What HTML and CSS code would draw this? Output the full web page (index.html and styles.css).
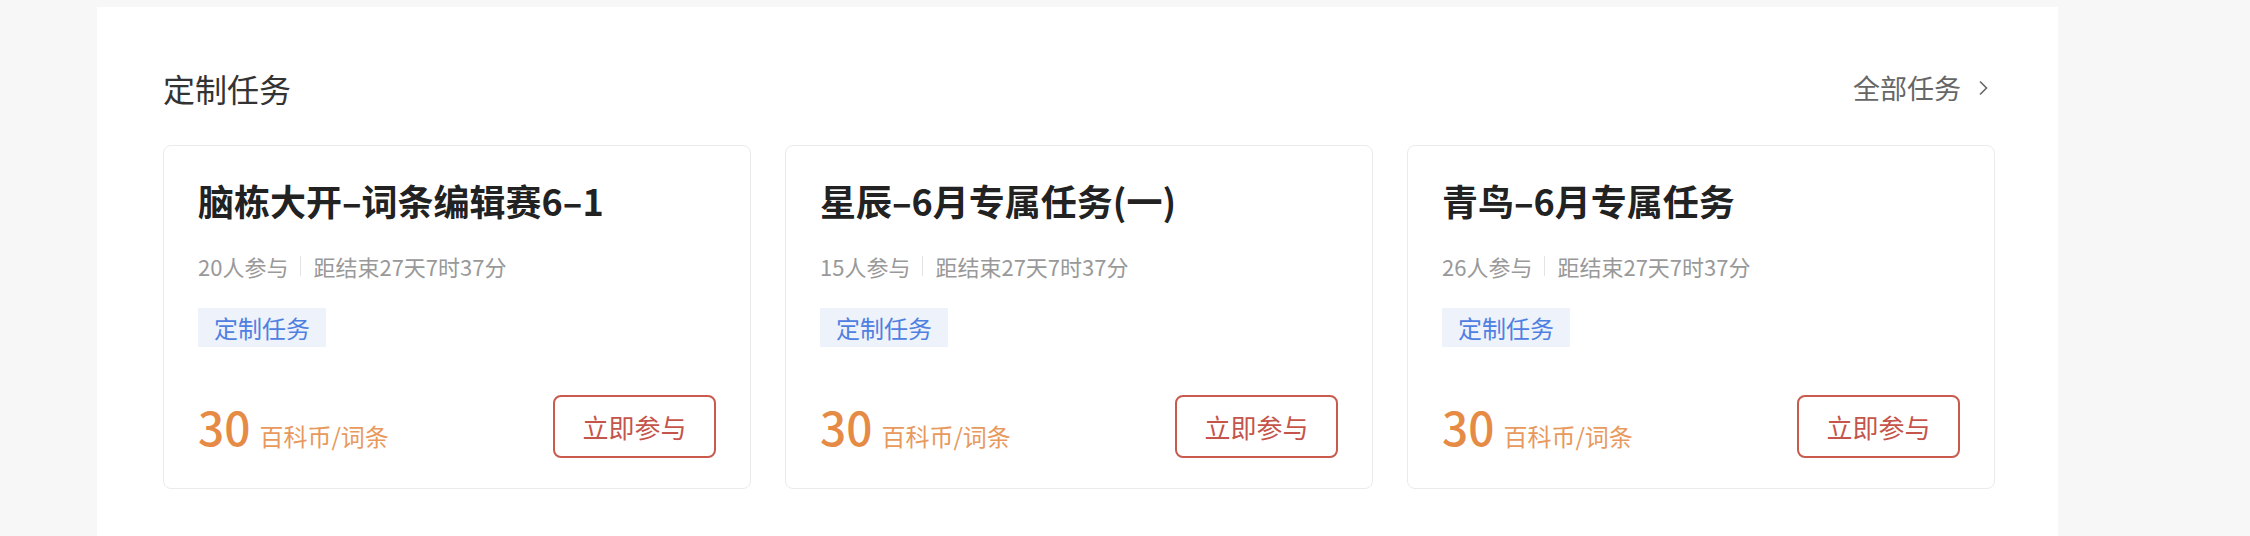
FILE: index.html
```html
<!DOCTYPE html>
<html lang="zh-CN">
<head>
    <meta charset="UTF-8">
    <title>定制任务</title>
    <link rel="stylesheet" href="styles.css">
</head>
<body>

<div class="panel">
    <!-- Section header -->
    <div class="panel-head">
        <h2 class="panel-title">定制任务</h2>
        <a class="more-link" href="#">全部任务
            <svg class="chevron" width="14" height="16" viewBox="0 0 14 16">
                <path d="M4 1.5 L10.5 8 L4 14.5" fill="none" stroke="#666" stroke-width="1.6"/>
            </svg>
        </a>
    </div>

    <!-- Task cards -->
    <div class="task-list">
        <div class="task-card">
            <div class="task-name">脑栋大开–词条编辑赛6–1</div>
            <div class="task-meta">
                <span>20人参与</span>
                <span class="divider"></span>
                <span>距结束27天7时37分</span>
            </div>
            <span class="task-tag">定制任务</span>
            <div class="task-foot">
                <div class="reward"><span class="reward-num">30</span><span class="reward-unit">百科币/词条</span></div>
                <button class="join-btn">立即参与</button>
            </div>
        </div>

        <div class="task-card">
            <div class="task-name">星辰–6月专属任务(一)</div>
            <div class="task-meta">
                <span>15人参与</span>
                <span class="divider"></span>
                <span>距结束27天7时37分</span>
            </div>
            <span class="task-tag">定制任务</span>
            <div class="task-foot">
                <div class="reward"><span class="reward-num">30</span><span class="reward-unit">百科币/词条</span></div>
                <button class="join-btn">立即参与</button>
            </div>
        </div>

        <div class="task-card">
            <div class="task-name">青鸟–6月专属任务</div>
            <div class="task-meta">
                <span>26人参与</span>
                <span class="divider"></span>
                <span>距结束27天7时37分</span>
            </div>
            <span class="task-tag">定制任务</span>
            <div class="task-foot">
                <div class="reward"><span class="reward-num">30</span><span class="reward-unit">百科币/词条</span></div>
                <button class="join-btn">立即参与</button>
            </div>
        </div>
    </div>
</div>

</body>
</html>
```

FILE: styles.css
```css
body {
    margin: 0;
    background-color: #f7f7f7;
    font-family: "Noto Sans CJK SC", "Noto Sans", sans-serif;
}
.panel {
    width: 1961px;
    min-height: 529px;
    margin: 7px 0 0 97px;
    padding: 59px 63px 0 66px;
    box-sizing: border-box;
    background-color: #fff;
}
.panel-head {
    display: flex;
    align-items: center;
    justify-content: space-between;
    height: 44px;
}
.panel-title {
    margin: 0;
    font-size: 32px;
    font-weight: normal;
    line-height: 44px;
    color: #333;
}
.more-link {
    display: flex;
    align-items: center;
    font-size: 27px;
    line-height: 44px;
    color: #666;
    text-decoration: none;
}
.chevron {
    margin-left: 15px;
    margin-right: 5px;
}
.task-list {
    display: grid;
    grid-template-columns: repeat(3, 588px);
    gap: 34px;
    margin-top: 35px;
}
.task-card {
    display: flex;
    flex-direction: column;
    align-items: flex-start;
    height: 344px;
    padding: 30px 34px 30px;
    box-sizing: border-box;
    border: 1px solid #ebebeb;
    border-radius: 8px;
}
.task-name {
    font-size: 36px;
    font-weight: bold;
    line-height: 48px;
    color: #222;
}
.task-meta {
    display: flex;
    align-items: center;
    margin-top: 27px;
    font-size: 22px;
    line-height: 30px;
    color: #999;
}
.divider {
    width: 1px;
    height: 20px;
    margin: 0 12px;
    background-color: #e3e3e3;
}
.task-tag {
    margin-top: 27px;
    padding: 0 16px;
    font-size: 24px;
    line-height: 39px;
    color: #4f80e1;
    background-color: #eef3fb;
}
.task-foot {
    display: flex;
    align-items: center;
    justify-content: space-between;
    align-self: stretch;
    margin-top: auto;
}
.reward {
    display: flex;
    align-items: baseline;
    color: #e58b45;
}
.reward-num {
    font-size: 46px;
    font-weight: 500;
    line-height: 50px;
}
.reward-unit {
    margin-left: 9px;
    font-size: 24px;
    color: #e8995d;
}
.join-btn {
    width: 163px;
    height: 63px;
    padding: 0;
    font-family: inherit;
    font-size: 26px;
    color: #c5544a;
    background-color: #fff;
    border: 2px solid #c95a4d;
    border-radius: 8px;
    cursor: pointer;
}
```
